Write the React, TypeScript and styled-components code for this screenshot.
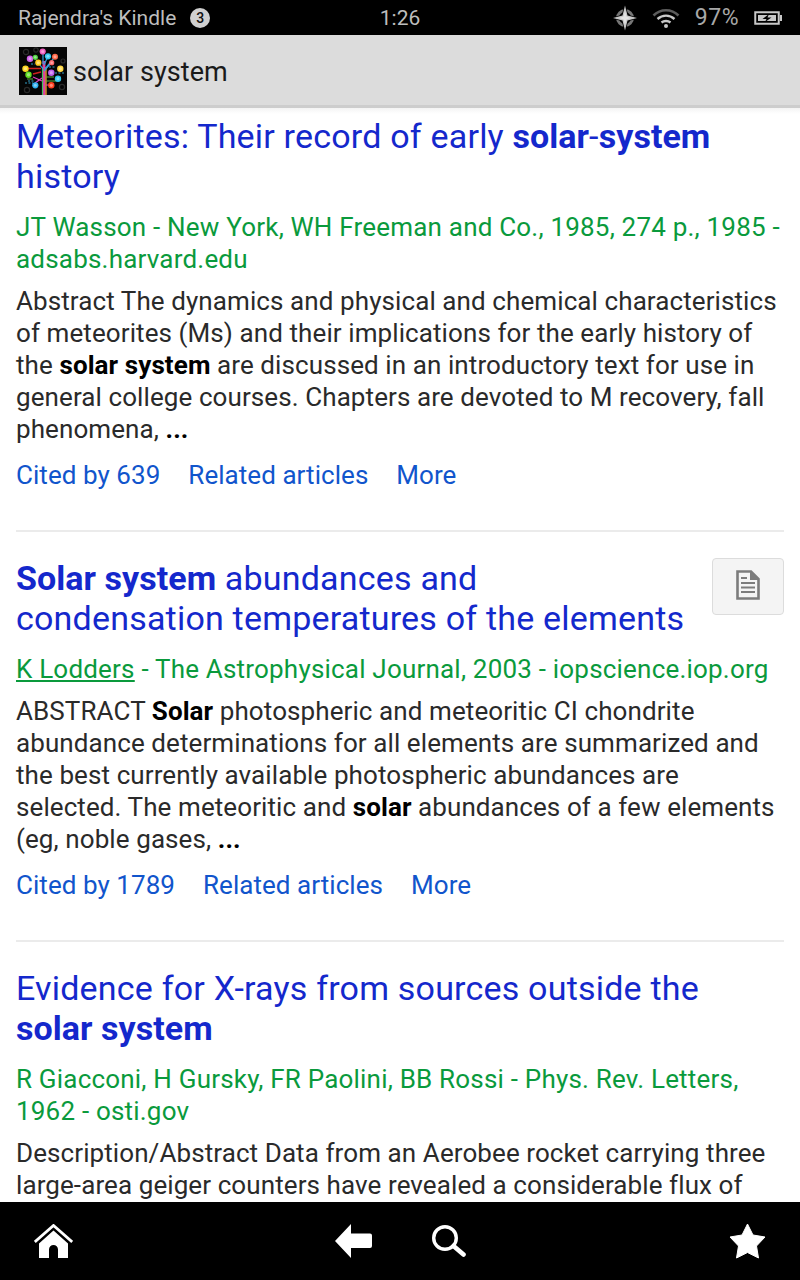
import React from "react";
import styled, { createGlobalStyle } from "styled-components";

const Global = createGlobalStyle`
  html, body { margin: 0; padding: 0; background: #fff; }
  body { font-family: Roboto, "Liberation Sans", sans-serif; }
  #root { width: 800px; height: 1280px; }
`;
const Screen = styled.div`
  width: 800px; height: 1280px; display: flex; flex-direction: column; overflow: hidden; background: #fff;
`;
const StatusBar = styled.header`
  height: 35px; flex: none; background: #000; color: #bdbdbd; display: grid;
  grid-template-columns: 1fr auto 1fr; align-items: center; padding: 0 18px; font-size: 21px;
`;
const StatusLeft = styled.div`display: flex; align-items: center; gap: 14px;`;
const Badge = styled.span`
  width: 20px; height: 20px; border-radius: 50%; background: #d0d0d0; color: #111; font-size: 14px;
  font-weight: 500; display: flex; align-items: center; justify-content: center;
`;
const Clock = styled.span`font-size: 21px;`;
const StatusRight = styled.div`display: flex; align-items: center; justify-content: flex-end; gap: 15px;`;
const Percent = styled.span`font-size: 23px; color: #a8a8a8; letter-spacing: 0.5px;`;
const AppBar = styled.div`
  height: 73px; flex: none; background: #dcdcdc; display: flex; align-items: center; padding: 2px 0 0 19px; gap: 6px;
  font-size: 27px; color: #1a1a1a; box-sizing: border-box; border-bottom: 3px solid #cdcdcd;
`;
const AppTitle = styled.span`padding-top: 2px; letter-spacing: 0.08px;`;
const Content = styled.main`
  flex: 1; min-height: 0; overflow: hidden; padding: 8px 16px 0;
  background: linear-gradient(#f4f4f4, #fff 6px);
`;
const Card = styled.article`
  position: relative; padding: 26px 0 39px; border-bottom: 2px solid #ebebeb;
  &:first-child { padding-top: 0; }
  &:last-child { border-bottom: 0; }
`;
const Title = styled.h3<{ $narrow?: boolean }>`
  margin: 0; font-size: 34px; line-height: 40px; font-weight: 400; color: #1428cc; letter-spacing: 0.2px;
  max-width: ${p => (p.$narrow ? "670px" : "none")};
  b { font-weight: 700; letter-spacing: 0.05px; }
`;
const Meta = styled.div`
  margin-top: 15px; font-size: 26px; line-height: 32px; color: #0a9a3c; letter-spacing: 0.2px;
  u { text-decoration: underline; }
`;
const Snippet = styled.div`
  margin-top: 10px; font-size: 26px; line-height: 32px; color: #2a2a2a; letter-spacing: 0.09px;
  b { color: #000; font-weight: 700; }
`;
const Links = styled.div`
  margin-top: 14px; display: flex; gap: 28px; font-size: 26px; line-height: 32px; color: #1155cc; letter-spacing: 0.05px;
`;
const DocButton = styled.div`
  position: absolute; right: 0; top: 26px; width: 70px; height: 52px; padding-bottom: 3px; border: 1px solid #dcdcdc; border-radius: 4px;
  background: #f4f4f4; display: flex; align-items: center; justify-content: center;
`;
const Footer = styled.footer`
  height: 78px; flex: none; background: #000; display: flex; align-items: center; padding: 0 34px;
`;
const FooterLeft = styled.div`flex: 1; display: flex;`;
const FooterCenter = styled.div`display: flex; align-items: center; gap: 60px;`;
const FooterRight = styled.div`flex: 1; display: flex; justify-content: flex-end;`;

const TreeLogo = () => {
  const dots: [number, number, string, number][] = [
    [23.7, 4.5, "#f060c0", 3.1], [11, 11.7, "#d060e8", 3.2], [16.3, 10.3, "#50d040", 2.6], [29, 9.3, "#30c8f0", 3.1],
    [36, 9.7, "#ff6a4a", 3], [19.3, 15.7, "#ffc820", 3.1], [32.7, 15.7, "#ff6a6a", 2.6], [6.5, 21.7, "#ffd820", 3.2],
    [41.3, 21.7, "#ffd840", 3.2], [32.3, 25.7, "#c060f0", 3.2], [9.5, 27.7, "#60e020", 3.2],
    [39, 31.7, "#30c8f0", 3.2], [16.3, 38.3, "#30b0f0", 3.1], [32.3, 38.3, "#ff4020", 3.2],
  ];
  return (
    <svg width="48" height="48" viewBox="0 0 48 48" aria-hidden="true">
      <rect width="48" height="48" fill="#050505" />
      <g fill="none" strokeWidth="1.2">
        <path d="M25 48V14" stroke="#e040a0" strokeWidth="3" />
        <path d="M23.500 48V20" stroke="#40c060" />
        <path d="M27 48V20" stroke="#ffb030" />
        <path d="M24 22L19.300 15.700M24 17V5M25 18L29 9.300M26 22L36 9.700M25 24L32 16" stroke="#30a0e0" />
        <path d="M8 21.500H22M14 27L22 25" stroke="#d02020" strokeWidth="1.600" />
        <path d="M27 30H35M27 34H38M8 32H14" stroke="#60b040" />
        <path d="M16 36L23 31M32 38H27M14 30L23 34" stroke="#e040c0" />
        <path d="M9 34H15M30 20H36M36 26H45M6 36H14M12 17H16" stroke="#35a0c8" strokeDasharray="2 1.500" />
        <circle cx="7" cy="5" r="2.600" stroke="#2a2a2a" />
        <circle cx="17" cy="3" r="2.200" stroke="#2a2a2a" />
        <circle cx="43" cy="40" r="2.600" stroke="#2a2a2a" />
        <circle cx="8" cy="43" r="2.600" stroke="#2a2a2a" />
        <circle cx="44" cy="14" r="2" stroke="#2a2a2a" />
      </g>
      {dots.map(([x, y, c, r], i) => <circle key={i} cx={x} cy={y} r={r} fill={c} />)}
      {dots.map(([x, y, , r], i) => <circle key={i} cx={x} cy={y} r={r * 0.5} fill="#fff" opacity="0.4" />)}
    </svg>
  );
};

const Compass = () => (
  <svg width="24" height="26" viewBox="0 0 24 26" aria-hidden="true">
    <circle cx="12" cy="13" r="7.500" fill="none" stroke="#777" strokeWidth="3" />
    <path d="M12 0.500L14.500 10.500L24 13L14.500 15.500L12 25.500L9.500 15.500L0 13L9.500 10.500Z" fill="#000" stroke="#000" strokeWidth="1.500" />
    <path d="M12 0.500L14.500 10.500L24 13L14.500 15.500L12 25.500L9.500 15.500L0 13L9.500 10.500Z" fill="#c8c8c8" />
    <path d="M12 6L13.500 11.500L18 13L13.500 14.500L12 20L10.500 14.500L6 13L10.500 11.500Z" fill="#e4e4e4" />
  </svg>
);
const Wifi = () => (
  <svg width="28" height="22" viewBox="0 0 28 22" aria-hidden="true" fill="none" strokeLinecap="butt">
    <path d="M1.500 8.500C8.500 1.500 19.500 1.500 26.500 8.500" stroke="#5c5c5c" strokeWidth="2.600" />
    <path d="M5.500 12C10.500 7.500 17.500 7.500 22.500 12" stroke="#c8c8c8" strokeWidth="2.400" />
    <path d="M9.500 15.500C12 13.500 16 13.500 18.500 15.500" stroke="#c8c8c8" strokeWidth="2.400" />
    <circle cx="14" cy="19" r="2" fill="#c8c8c8" />
  </svg>
);
const Battery = () => (
  <svg width="28" height="16" viewBox="0 0 28 16" aria-hidden="true">
    <path d="M1.250 2.250H24.750V13.750H1.250Z" fill="none" stroke="#c8c8c8" strokeWidth="2" />
    <rect x="26" y="5" width="2" height="6" fill="#c8c8c8" />
    <rect x="4" y="5" width="18" height="6" fill="#c8c8c8" />
    <path d="M15 4L8.500 9H12.500L11 12L17.500 7.500H13.500Z" fill="#000" />
  </svg>
);
const DocIcon = () => (
  <svg width="24" height="30" viewBox="0 0 24 30" aria-hidden="true">
    <path d="M1.500 1.500H15L22.500 9V28.500H1.500Z" fill="none" stroke="#7c7c7c" strokeWidth="2.600" />
    <path d="M14 1.500L22.500 10H14Z" fill="#7c7c7c" />
    <path d="M5 8H11M5 13H19M5 17.500H19M5 22H19" stroke="#7c7c7c" strokeWidth="2" />
  </svg>
);
const HomeIcon = () => (
  <svg width="39" height="34" viewBox="0 0 39 34" aria-hidden="true">
    <path d="M0.800 18L19.500 1.500L38.200 18" fill="none" stroke="#fff" strokeWidth="2.800" />
    <path d="M19.500 6.500L34 19.500V34H24V25.500A4.500 4.500 0 0 0 15 25.500V34H5V19.500Z" fill="#fff" />
  </svg>
);
const BackIcon = () => (
  <svg width="37" height="34" viewBox="0 0 37 34" aria-hidden="true">
    <path d="M16 0V9.500H35A2 2 0 0 1 37 11.500V22A2 2 0 0 1 35 24H16V34L0 17Z" fill="#fff" />
  </svg>
);
const SearchIcon = () => (
  <svg width="34" height="32" viewBox="0 0 34 32" aria-hidden="true" fill="none" stroke="#fff">
    <circle cx="13" cy="13" r="11.300" strokeWidth="3.400" />
    <path d="M21.500 21L31.500 29.500" strokeWidth="4.600" strokeLinecap="round" />
  </svg>
);
const StarIcon = () => (
  <svg width="37" height="36" viewBox="0 0 37 36" aria-hidden="true">
    <path d="M18.500 1L24 12L36 14L27.500 23L29.500 35L18.500 29.500L7.500 35L9.500 23L1 14L13 12Z" fill="#fff" stroke="#fff" strokeLinejoin="round" />
  </svg>
);

export default function App() {
  return (
    <Screen>
      <Global />
      <StatusBar>
        <StatusLeft>
          <span>Rajendra's Kindle</span>
          <Badge>3</Badge>
        </StatusLeft>
        <Clock>1:26</Clock>
        <StatusRight>
          <Compass />
          <Wifi />
          <Percent>97%</Percent>
          <Battery />
        </StatusRight>
      </StatusBar>
      <AppBar>
        <TreeLogo />
        <AppTitle>solar system</AppTitle>
      </AppBar>
      <Content>
        <Card>
          <Title>Meteorites: Their record of early <b>solar</b>-<b>system</b> history</Title>
          <Meta>JT Wasson - New York, WH Freeman and Co., 1985, 274 p., 1985 - adsabs.harvard.edu</Meta>
          <Snippet>
            Abstract The dynamics and physical and chemical characteristics of meteorites (Ms) and their implications for the early history of the <b>solar system</b> are discussed in an introductory text for use in general college courses. Chapters are devoted to M recovery, fall phenomena, <b>...</b>
          </Snippet>
          <Links><span>Cited by 639</span><span>Related articles</span><span>More</span></Links>
        </Card>
        <Card>
          <Title $narrow><b>Solar system</b> abundances and condensation temperatures of the elements</Title>
          <DocButton><DocIcon /></DocButton>
          <Meta><u>K Lodders</u> - The Astrophysical Journal, 2003 - iopscience.iop.org</Meta>
          <Snippet>
            ABSTRACT <b>Solar</b> photospheric and meteoritic CI chondrite abundance determinations for all elements are summarized and the best currently available photospheric abundances are selected. The meteoritic and <b>solar</b> abundances of a few elements (eg, noble gases, <b>...</b>
          </Snippet>
          <Links><span>Cited by 1789</span><span>Related articles</span><span>More</span></Links>
        </Card>
        <Card>
          <Title>Evidence for X-rays from sources outside the <b>solar system</b></Title>
          <Meta>R Giacconi, H Gursky, FR Paolini, BB Rossi - Phys. Rev. Letters, 1962 - osti.gov</Meta>
          <Snippet>
            Description/Abstract Data from an Aerobee rocket carrying three large-area geiger counters have revealed a considerable flux of
          </Snippet>
        </Card>
      </Content>
      <Footer>
        <FooterLeft><HomeIcon /></FooterLeft>
        <FooterCenter><BackIcon /><SearchIcon /></FooterCenter>
        <FooterRight><StarIcon /></FooterRight>
      </Footer>
    </Screen>
  );
}
